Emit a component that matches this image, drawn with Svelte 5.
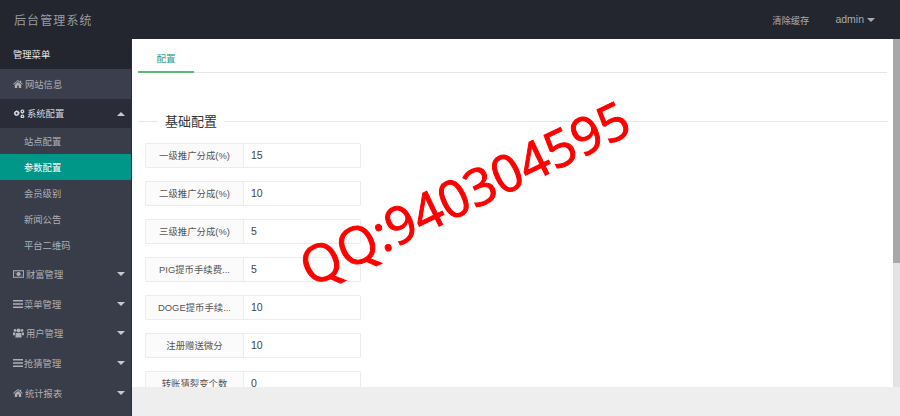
<script>
	const rows = [
		{ label: '一级推广分成(%)', value: '15' },
		{ label: '二级推广分成(%)', value: '10' },
		{ label: '三级推广分成(%)', value: '5' },
		{ label: 'PIG提币手续费...', value: '5' },
		{ label: 'DOGE提币手续...', value: '10' },
		{ label: '注册赠送微分', value: '10' },
		{ label: '转账猜裂变个数', value: '0' }
	];
	const subItems = ['站点配置', '参数配置', '会员级别', '新闻公告', '平台二维码'];
	const lowerMenu = [
		{ label: '财富管理', icon: 'money' },
		{ label: '菜单管理', icon: 'bars' },
		{ label: '用户管理', icon: 'users' },
		{ label: '抢猜管理', icon: 'bars' },
		{ label: '统计报表', icon: 'home' }
	];
</script>

{#snippet icon(name)}
	{#if name === 'home'}
		<svg class="ico" viewBox="0 0 12 10" width="10" height="8"><path d="M6 0 0 5l.7.8L6 1.4l5.3 4.4.7-.8-2-1.7V1H8.600v1.200zM2 6v4h3V7h2v3h3V6L6 2.600z" /></svg>
	{:else if name === 'cogs'}
		<svg class="ico" viewBox="0 0 14 10" width="12" height="9"><path fill-rule="evenodd" d="M4.500 1l.6 1 1.200-.2.4 1.100 1 .6-.4 1.100.4 1.100-1 .6-.4 1.100-1.200-.2-.6 1-.9-.8-1.200.2-.4-1.100-1-.6.3-1.100L1 3.700l1-.6.400-1.100 1.200.2zM4.200 3.600a1.100 1.100 0 1 0 .01 0z" /><path fill-rule="evenodd" d="M11 0l.5.700.9-.1.200.9.800.4-.4.800.4.800-.8.400-.2.900-.9-.1-.5.700-.6-.7-.9.100-.2-.9-.8-.4.400-.8-.4-.8.800-.4.200-.9.900.1zM11 1.900a.7.7 0 1 0 .01 0z" /><path fill-rule="evenodd" d="M11 6l.5.600.9-.1.200.9.800.400-.4.700.4.800-.8.400-.2.900-.9-.1-.5.500-.6-.5-.9.100-.2-.9-.8-.4.400-.8-.4-.7.800-.4.200-.9.900.1zM11 7.500a.7.7 0 1 0 .01 0z" /></svg>
	{:else if name === 'money'}
		<svg class="ico" viewBox="0 0 12 8" width="11" height="8"><path fill-rule="evenodd" d="M0 0h12v8H0zM1 1v6h10V1zM6 1.700a2.300 2.300 0 1 0 .01 0zM2 2.500h1L2 4zM10 5.500H9L10 4z" /></svg>
	{:else if name === 'bars'}
		<svg class="ico bars" viewBox="0 0 10 8" width="10" height="8"><path d="M0 0h10v1.400H0zM0 3.300h10v1.400H0zM0 6.600h10V8H0z" /></svg>
	{:else if name === 'users'}
		<svg class="ico" viewBox="0 0 12 10" width="11" height="10"><circle cx="2.200" cy="2.200" r="1.500" /><circle cx="9.800" cy="2.200" r="1.500" /><circle cx="6" cy="2.300" r="2.200" /><path d="M0 4.500h2.600L2.300 7.500H0zM12 4.500H9.400l.3 3H12zM3.200 5h5.600l.7 5h-7z" /></svg>
	{/if}
{/snippet}

<div class="page">
	<header class="topbar">
		<div class="brand">后台管理系统</div>
		<nav class="top-nav">
			<span>清除缓存</span>
			<span class="user">admin<i class="caret"></i></span>
		</nav>
	</header>

	<div class="body">
		<aside class="sidebar">
			<div class="side-title">管理菜单</div>
			<div class="side-item single">{@render icon('home')}网站信息</div>
			<div class="side-item open">
				{@render icon('cogs')}系统配置<i class="caret up"></i>
			</div>
			<div class="sub-list">
				{#each subItems as item, i}
					<div class="sub-item" class:active={i === 1}>{item}</div>
				{/each}
			</div>
			{#each lowerMenu as item}
				<div class="side-item lower">{@render icon(item.icon)}{item.label}<i class="caret"></i></div>
			{/each}
		</aside>

		<main class="main">
			<div class="scroll-area">
				<div class="content">
					<div class="tabs"><div class="tab">配置</div></div>
					<fieldset class="group">
						<legend>基础配置</legend>
						{#each rows as row}
							<div class="row">
								<div class="label">{row.label}</div>
								<div class="value">{row.value}</div>
							</div>
						{/each}
					</fieldset>
				</div>
				<div class="scrollbar"><div class="thumb"></div></div>
			</div>
			<footer class="footer"></footer>
			<div class="watermark">QQ:940304595</div>
		</main>
	</div>
</div>

<style>
	:global(html), :global(body) {
		margin: 0;
		overflow: hidden;
	}

	.page {
		display: flex;
		flex-direction: column;
		width: 900px;
		height: 416px;
		font-family: 'Liberation Sans', 'Noto Sans CJK SC', sans-serif;
		color: #555;
	}

	.topbar {
		display: flex;
		flex: none;
		align-items: center;
		justify-content: space-between;
		height: 39px;
		padding: 0 25px 0 14px;
		background: #23262e;
		color: #a9abaf;
	}

	.brand {
		font-size: 12px;
		letter-spacing: 1.1px;
		color: #9a9ca1;
	}

	.top-nav {
		display: flex;
		gap: 26px;
		font-size: 9.3px;
	}

	.user {
		font-size: 10.5px;
		line-height: 12px;
	}

	.caret {
		display: inline-block;
		margin-left: 3px;
		border-top: 4px solid currentColor;
		border-right: 4px solid transparent;
		border-left: 4px solid transparent;
		vertical-align: 1px;
	}

	.body {
		display: flex;
		flex: 1;
		min-height: 0;
	}

	.sidebar {
		flex: none;
		width: 131px;
		border-right: 1px solid #2b2e3a;
		background: #393d49;
		color: #aeb0b6;
		font-size: 9.3px;
	}

	.side-title {
		display: flex;
		align-items: center;
		height: 30px;
		padding-left: 13px;
		background: #23262e;
		color: #e8e8ea;
	}

	.side-item {
		display: flex;
		position: relative;
		align-items: center;
		height: 29.5px;
		padding-left: 13px;
	}

	.side-item.lower {
		height: 29.7px;
	}

	.side-item.single {
		background: #3b3e4c;
	}

	.side-item.open {
		background: #2a2d38;
		color: #d8d9dc;
	}

	.side-item .caret {
		position: absolute;
		top: 13px;
		right: 6px;
		margin: 0;
		color: #c8c9cd;
	}

	.caret.up {
		transform: rotate(180deg);
	}

	.ico {
		flex: none;
		margin-right: 2px;
		fill: currentColor;
	}

	.ico.bars {
		margin-right: 1px;
	}

	.sub-list {
		padding-bottom: 1px;
	}

	.sub-item {
		display: flex;
		align-items: center;
		height: 26px;
		padding-left: 24px;
	}

	.sub-item.active {
		background: #009688;
		color: #fff;
	}

	.main {
		display: flex;
		position: relative;
		flex: 1;
		flex-direction: column;
		min-width: 0;
	}

	.scroll-area {
		display: flex;
		flex: 1;
		min-height: 0;
		overflow: hidden;
		background: #fff;
	}

	.content {
		flex: 1;
		min-width: 0;
		padding: 0 6px;
	}

	.tabs {
		height: 33px;
		border-bottom: 1px solid #e6e6e6;
	}

	.tab {
		box-sizing: border-box;
		width: 56px;
		height: 34px;
		padding-top: 14px;
		border-bottom: 2px solid #5fb878;
		color: #2a9d8f;
		font-size: 9.5px;
		line-height: 12px;
		text-align: center;
	}

	.group {
		margin: 38px 0 0;
		padding: 11px 7px 0;
		border: 0;
		border-top: 1px solid #e6e6e6;
	}

	legend {
		margin-left: 13px;
		padding: 0 7px 2px;
		color: #333;
		font-size: 13px;
	}

	.row {
		display: flex;
		box-sizing: border-box;
		width: 216px;
		height: 25px;
		margin-bottom: 13px;
		border: 1px solid #ececec;
		border-radius: 1px;
		font-size: 9.4px;
		line-height: 23px;
	}

	.label {
		flex: none;
		box-sizing: border-box;
		width: 98px;
		border-right: 1px solid #ececec;
		background: #fbfbfb;
		text-align: center;
		white-space: nowrap;
	}

	.value {
		padding-left: 7px;
		color: #444;
		font-size: 10.5px;
	}

	.scrollbar {
		flex: none;
		width: 7px;
		background: #e3e3e3;
	}

	.thumb {
		height: 224px;
		background: #a8a8a8;
	}

	.footer {
		flex: none;
		height: 29px;
		background: #eee;
	}

	.watermark {
		position: absolute;
		top: 128px;
		left: 153px;
		color: #f00;
		font-family: 'Open Sans', sans-serif;
		font-size: 51.500px;
		line-height: 1;
		white-space: nowrap;
		-webkit-text-stroke: 1px #f00;
		transform: rotate(-25.600deg);
	}
</style>
